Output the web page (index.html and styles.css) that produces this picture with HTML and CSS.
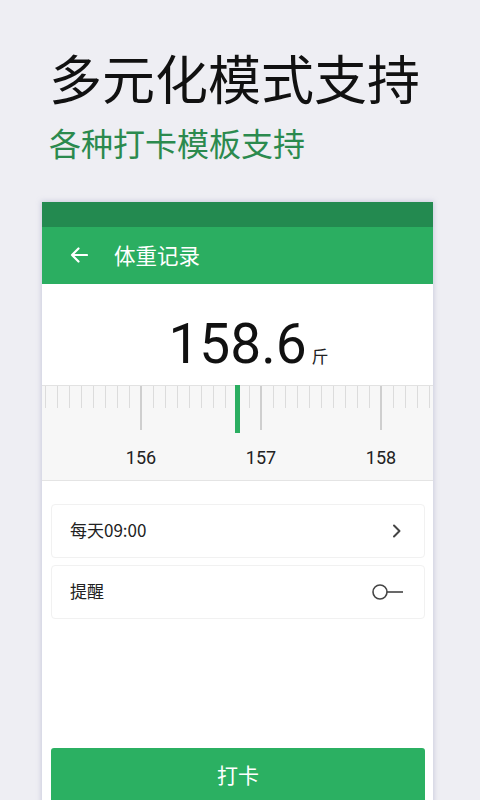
FILE: index.html
```html
<!DOCTYPE html>
<html lang="zh-CN">
<head>
<meta charset="utf-8">
<title>体重记录</title>
<link rel="stylesheet" href="styles.css">
</head>
<body>
<div class="page">
  <section class="hero">
    <h1 class="hero-title">多元化模式支持</h1>
    <p class="hero-sub">各种打卡模板支持</p>
  </section>

  <div class="phone">
    <div class="statusbar"></div>
    <header class="appbar">
      <svg class="back" width="18" height="16" viewBox="0 0 18 16" aria-hidden="true">
        <path d="M17 8H2M8.5 1.5L2 8l6.5 6.5" fill="none" stroke="#fff" stroke-width="2.2" stroke-linecap="round" stroke-linejoin="round"/>
      </svg>
      <span class="appbar-title">体重记录</span>
    </header>

    <div class="value-area">
      <span class="value">158.6</span>
      <span class="unit">斤</span>
    </div>

    <div class="ruler">
      <div class="ticks"></div>
      <div class="indicator"></div>
      <div class="labels">
        <span class="label">156</span>
        <span class="label">157</span>
        <span class="label">158</span>
      </div>
    </div>

    <div class="settings">
      <div class="card">
        <span class="card-text">每天09:00</span>
        <svg class="chevron" width="10" height="14" viewBox="0 0 10 14" aria-hidden="true">
          <path d="M2 1.5L7.5 7 2 12.5" fill="none" stroke="#444" stroke-width="2" stroke-linecap="round" stroke-linejoin="round"/>
        </svg>
      </div>
      <div class="card">
        <span class="card-text">提醒</span>
        <svg class="toggle" width="32" height="16" viewBox="0 0 32 16" aria-hidden="true">
          <circle cx="8" cy="8" r="7" fill="#fff" stroke="#444" stroke-width="1.6"/>
          <path d="M15 8H31" stroke="#444" stroke-width="1.6"/>
        </svg>
      </div>
    </div>

    <button class="checkin">打卡</button>
  </div>
</div>
</body>
</html>
```

FILE: styles.css
```css
* {
  box-sizing: border-box;
}

html, body {
  margin: 0;
  padding: 0;
}

body {
  width: 480px;
  height: 800px;
  overflow: hidden;
  background: #eeeef3;
  font-family: "Noto Sans CJK SC", "Noto Sans", sans-serif;
}

.page {
  display: flex;
  flex-direction: column;
}

.hero {
  padding: 51px 0 0 49px;
}

.hero-title {
  margin: 0;
  font-size: 53px;
  line-height: 52px;
  font-weight: 400;
  color: #111;
}

.hero-sub {
  margin: 24px 0 0;
  font-size: 32px;
  line-height: 31px;
  color: #2b8a4e;
}

.phone {
  margin: 44px 0 0 42px;
  width: 391px;
  height: 620px;
  background: #fff;
  box-shadow: 0 0 5px 1px rgba(140, 146, 185, 0.35);
  display: flex;
  flex-direction: column;
}

.statusbar {
  height: 25px;
  background: #238a50;
}

.appbar {
  height: 57px;
  background: #2bae61;
  display: flex;
  align-items: center;
  padding: 0 0 3px 28px;
  gap: 26px;
}

.back {
  display: block;
  margin-top: 2px;
}

.appbar-title {
  color: #fff;
  font-size: 21.5px;
  line-height: 21px;
}

.value-area {
  height: 101px;
  padding-top: 33px;
  display: grid;
  grid-template-columns: 1fr auto 1fr;
  align-items: baseline;
}

.value {
  grid-column: 2;
  font-family: Roboto, "Noto Sans", sans-serif;
  font-size: 55px;
  line-height: 55px;
  color: #111;
}

.unit {
  grid-column: 3;
  margin-left: 5px;
  font-size: 17px;
  line-height: 17px;
  color: #222;
}

.ruler {
  position: relative;
  height: 96px;
  background: #f7f7f7;
  border-top: 1px solid #e2e2e2;
  border-bottom: 1px solid #e4e4e4;
}

.ticks {
  height: 44px;
  background-image:
    linear-gradient(to right, #cfcfcf 0 2px, transparent 2px),
    linear-gradient(to right, #dcdcdc 0 1px, transparent 1px);
  background-size: 120px 44px, 12px 22px;
  background-position: 98px 0, 3px 0;
  background-repeat: repeat-x, repeat-x;
}

.indicator {
  position: absolute;
  left: 193px;
  top: -1px;
  width: 5px;
  height: 48px;
  background: #2bae61;
}

.labels {
  display: flex;
  padding-left: 39px;
  margin-top: 19px;
}

.label {
  flex: none;
  width: 120px;
  text-align: center;
  font-family: Roboto, "Noto Sans", sans-serif;
  font-size: 18px;
  line-height: 18px;
  color: #222;
}

.settings {
  display: flex;
  flex-direction: column;
  gap: 7px;
  padding: 23px 8px 0 9px;
}

.card {
  height: 54px;
  border: 1px solid #f1f1f1;
  border-radius: 4px;
  background: #fff;
  display: flex;
  align-items: center;
  justify-content: space-between;
  padding: 0 20px 0 18px;
}

.card-text {
  font-size: 17px;
  line-height: 17px;
  color: #222;
  margin-bottom: 3px;
}

.chevron {
  display: block;
  margin-right: 2px;
}

.toggle {
  display: block;
}

.checkin {
  margin: 129px 8px 0 9px;
  height: 55px;
  border: none;
  border-radius: 3px;
  background: #2bb062;
  color: #fff;
  font-family: "Noto Sans CJK SC", "Noto Sans", sans-serif;
  font-size: 21px;
  padding: 0 0 4px;
}
```
